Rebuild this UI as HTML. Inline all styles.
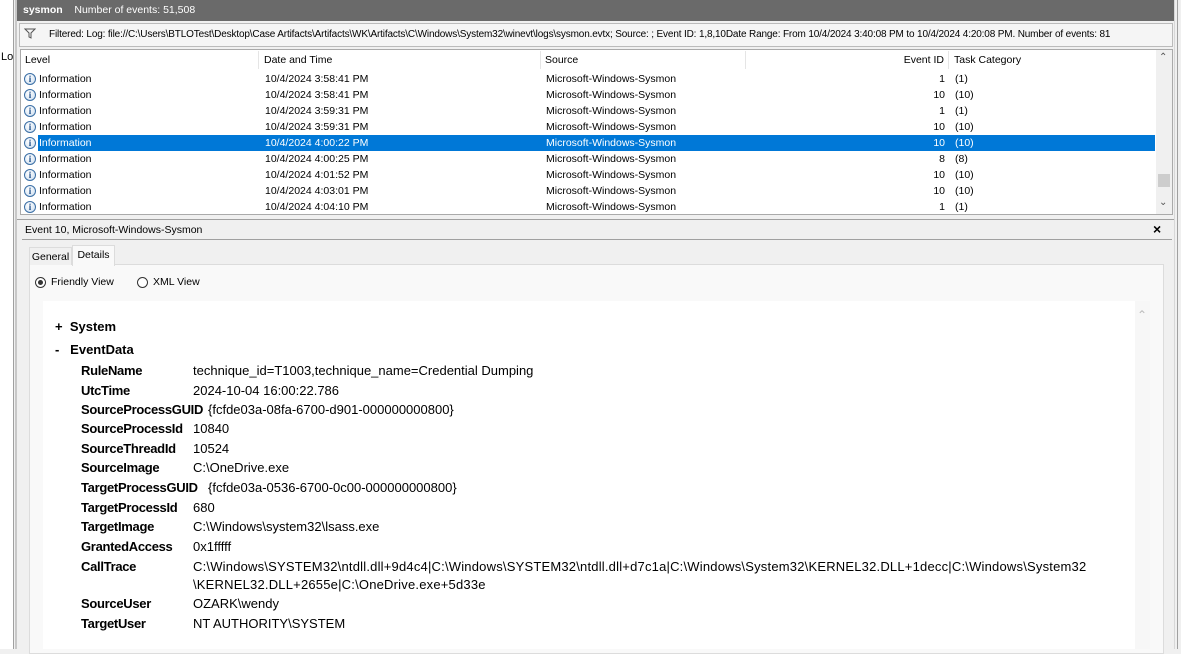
<!DOCTYPE html>
<html><head><style>
*{margin:0;padding:0;box-sizing:border-box}
body{width:1181px;height:649px;position:relative;overflow:hidden;background:#f0f0f0;font-family:"Liberation Sans",sans-serif;color:#000}
.a{position:absolute}
.row{position:absolute;left:22px;width:1133px;height:16px;font-size:10.5px;line-height:16px}
.row span{position:absolute;white-space:nowrap}
.sel{background:#0078d7;color:#fff}
.ic{position:absolute;left:2px;top:2px;width:12px;height:12px;border-radius:50%;border:1px solid #3a6ea5;background:radial-gradient(circle at 40% 35%,#fff,#c9dcef);font:bold 9px/10px "Liberation Serif",serif;color:#1e4f8a;text-align:center}
.d{position:absolute;font-size:13px;white-space:nowrap}
.l{left:81px;font-weight:bold;letter-spacing:-0.3px}
.v{left:193px}
</style></head><body>
<div class="a" style="left:0;top:0;width:14px;height:649px;background:#fff;border-right:1px solid #a0a0a0"></div>
<div class="a" style="left:1px;top:51px;font-size:11px">Lo</div>
<div class="a" style="left:15px;top:0;width:2px;height:649px;background:#c8c8c8"></div>
<div class="a" style="left:1174px;top:0;width:7px;height:649px;background:#f0f0f0;border-left:1px solid #d8d8d8"></div>
<div class="a" style="left:1177px;top:0;width:1px;height:649px;background:#a0a0a0"></div>
<div class="a" style="left:17px;top:0;width:1157px;height:21px;background:#6a6a6a;color:#fff;font-size:10.5px;line-height:21px;padding-left:6px"><b>sysmon</b>&nbsp;&nbsp;&nbsp; Number of events: 51,508</div>
<div class="a" style="left:19px;top:23px;width:1154px;height:24px;background:#f5f5f5;border:1px solid #bbb;font-size:10px;letter-spacing:-0.15px;line-height:22px;padding-left:29px;white-space:nowrap;overflow:hidden">Filtered: Log: file://C:\Users\BTLOTest\Desktop\Case Artifacts\Artifacts\WK\Artifacts\C\Windows\System32\winevt\logs\sysmon.evtx; Source: ; Event ID: 1,8,10Date Range: From 10/4/2024 3:40:08 PM to 10/4/2024 4:20:08 PM. Number of events: 81</div>
<svg class="a" style="left:24px;top:28px" width="12" height="11"><path d="M1 1h10L7 5v5L5 9V5z" fill="none" stroke="#555"/></svg>
<div class="a" style="left:20px;top:49px;width:1153px;height:166px;background:#fff;border:1px solid #aaa"></div>
<div class="a" style="left:21px;top:51px;width:1134px;height:18px;font-size:10.5px;line-height:18px">
<span class="a" style="left:4px">Level</span><span class="a" style="left:237px;top:0;width:1px;height:18px;background:#e5e5e5"></span>
<span class="a" style="left:243px">Date and Time</span><span class="a" style="left:519px;top:0;width:1px;height:18px;background:#e5e5e5"></span>
<span class="a" style="left:524px">Source</span><span class="a" style="left:724px;top:0;width:1px;height:18px;background:#e5e5e5"></span>
<span class="a" style="left:860px;width:63px;text-align:right">Event ID</span><span class="a" style="left:927px;top:0;width:1px;height:18px;background:#e5e5e5"></span>
<span class="a" style="left:933px">Task Category</span>
</div>
<div class="a" style="left:1156px;top:50px;width:16px;height:164px;background:#f0f0f0"></div>
<div class="a" style="left:1159px;top:52px;font-size:10px;color:#555">&#8963;</div>
<div class="a" style="left:1159px;top:197px;font-size:10px;color:#555">&#8964;</div>
<div class="a" style="left:1158px;top:174px;width:12px;height:13px;background:#cdcdcd"></div>
<div class="row" style="top:71px"><i class="ic">i</i><span style="left:17px">Information</span><span style="left:243px">10/4/2024 3:58:41 PM</span><span style="left:524px">Microsoft-Windows-Sysmon</span><span style="left:860px;width:63px;text-align:right">1</span><span style="left:933px">(1)</span></div>
<div class="row" style="top:87px"><i class="ic">i</i><span style="left:17px">Information</span><span style="left:243px">10/4/2024 3:58:41 PM</span><span style="left:524px">Microsoft-Windows-Sysmon</span><span style="left:860px;width:63px;text-align:right">10</span><span style="left:933px">(10)</span></div>
<div class="row" style="top:103px"><i class="ic">i</i><span style="left:17px">Information</span><span style="left:243px">10/4/2024 3:59:31 PM</span><span style="left:524px">Microsoft-Windows-Sysmon</span><span style="left:860px;width:63px;text-align:right">1</span><span style="left:933px">(1)</span></div>
<div class="row" style="top:119px"><i class="ic">i</i><span style="left:17px">Information</span><span style="left:243px">10/4/2024 3:59:31 PM</span><span style="left:524px">Microsoft-Windows-Sysmon</span><span style="left:860px;width:63px;text-align:right">10</span><span style="left:933px">(10)</span></div>
<div class="row" style="top:135px"><div class="a sel" style="left:16px;top:0;width:1117px;height:16px"></div><i class="ic">i</i><span style="left:17px;color:#fff">Information</span><span style="left:243px;color:#fff">10/4/2024 4:00:22 PM</span><span style="left:524px;color:#fff">Microsoft-Windows-Sysmon</span><span style="left:860px;width:63px;text-align:right;color:#fff">10</span><span style="left:933px;color:#fff">(10)</span></div>
<div class="row" style="top:151px"><i class="ic">i</i><span style="left:17px">Information</span><span style="left:243px">10/4/2024 4:00:25 PM</span><span style="left:524px">Microsoft-Windows-Sysmon</span><span style="left:860px;width:63px;text-align:right">8</span><span style="left:933px">(8)</span></div>
<div class="row" style="top:167px"><i class="ic">i</i><span style="left:17px">Information</span><span style="left:243px">10/4/2024 4:01:52 PM</span><span style="left:524px">Microsoft-Windows-Sysmon</span><span style="left:860px;width:63px;text-align:right">10</span><span style="left:933px">(10)</span></div>
<div class="row" style="top:183px"><i class="ic">i</i><span style="left:17px">Information</span><span style="left:243px">10/4/2024 4:03:01 PM</span><span style="left:524px">Microsoft-Windows-Sysmon</span><span style="left:860px;width:63px;text-align:right">10</span><span style="left:933px">(10)</span></div>
<div class="row" style="top:199px;height:15px;overflow:hidden"><i class="ic">i</i><span style="left:17px">Information</span><span style="left:243px">10/4/2024 4:04:10 PM</span><span style="left:524px">Microsoft-Windows-Sysmon</span><span style="left:860px;width:63px;text-align:right">1</span><span style="left:933px">(1)</span></div>
<div class="a" style="left:17px;top:216px;width:1157px;height:4px;background:#f0f0f0;border-bottom:1px solid #a0a0a0"></div>
<div class="a" style="left:25px;top:224px;font-size:10.5px">Event 10, Microsoft-Windows-Sysmon</div>
<div class="a" style="left:1153px;top:221px;font-size:14px;font-weight:bold">&#215;</div>
<div class="a" style="left:22px;top:239px;width:1150px;height:1px;background:#a0a0a0"></div>
<div class="a" style="left:29px;top:264px;width:1135px;height:390px;background:#f9f9f9;border:1px solid #dcdcdc"></div>
<div class="a" style="left:29px;top:247px;width:43px;height:18px;border:1px solid #dcdcdc;border-bottom:none;background:#f0f0f0;font-size:10.5px;line-height:18px;text-align:center">General</div>
<div class="a" style="left:72px;top:245px;width:43px;height:21px;border:1px solid #dcdcdc;border-bottom:none;background:#f9f9f9;font-size:10.5px;line-height:19px;text-align:center">Details</div>
<div class="a" style="left:35px;top:277px;width:11px;height:11px;border:1px solid #333;border-radius:50%;background:#fff"><div class="a" style="left:2px;top:2px;width:5px;height:5px;border-radius:50%;background:#333"></div></div>
<div class="a" style="left:51px;top:276px;font-size:10.5px">Friendly View</div>
<div class="a" style="left:137px;top:277px;width:11px;height:11px;border:1px solid #333;border-radius:50%;background:#fff"></div>
<div class="a" style="left:153px;top:276px;font-size:10.5px">XML View</div>
<div class="a" style="left:43px;top:301px;width:1107px;height:348px;background:#fff"></div>
<div class="a" style="left:1135px;top:301px;width:15px;height:348px;background:#f7f7f7"></div>
<div class="a" style="left:1137px;top:308px;font-size:12px;color:#bbb">&#8963;</div>
<div class="d" style="left:55px;top:319px;font-weight:bold">+&nbsp; System</div>
<div class="d" style="left:55px;top:342px;font-weight:bold">-&nbsp;&nbsp; EventData</div>
<div class="d l" style="top:363px">RuleName</div><div class="d v" style="top:363px">technique_id=T1003,technique_name=Credential Dumping</div>
<div class="d l" style="top:383px">UtcTime</div><div class="d v" style="top:383px">2024-10-04 16:00:22.786</div>
<div class="d l" style="top:402px">SourceProcessGUID</div><div class="d" style="left:208px;top:402px">{fcfde03a-08fa-6700-d901-000000000800}</div>
<div class="d l" style="top:421px">SourceProcessId</div><div class="d v" style="top:421px">10840</div>
<div class="d l" style="top:441px">SourceThreadId</div><div class="d v" style="top:441px">10524</div>
<div class="d l" style="top:460px">SourceImage</div><div class="d v" style="top:460px">C:\OneDrive.exe</div>
<div class="d l" style="top:480px">TargetProcessGUID</div><div class="d" style="left:208px;top:480px">{fcfde03a-0536-6700-0c00-000000000800}</div>
<div class="d l" style="top:500px">TargetProcessId</div><div class="d v" style="top:500px">680</div>
<div class="d l" style="top:519px">TargetImage</div><div class="d v" style="top:519px">C:\Windows\system32\lsass.exe</div>
<div class="d l" style="top:539px">GrantedAccess</div><div class="d v" style="top:539px">0x1fffff</div>
<div class="d l" style="top:559px">CallTrace</div><div class="d v" style="top:559px;letter-spacing:0.2px">C:\Windows\SYSTEM32\ntdll.dll+9d4c4|C:\Windows\SYSTEM32\ntdll.dll+d7c1a|C:\Windows\System32\KERNEL32.DLL+1decc|C:\Windows\System32</div>
<div class="d v" style="top:577px;letter-spacing:0.2px">\KERNEL32.DLL+2655e|C:\OneDrive.exe+5d33e</div>
<div class="d l" style="top:596px">SourceUser</div><div class="d v" style="top:596px">OZARK\wendy</div>
<div class="d l" style="top:616px">TargetUser</div><div class="d v" style="top:616px">NT AUTHORITY\SYSTEM</div>
</body></html>
